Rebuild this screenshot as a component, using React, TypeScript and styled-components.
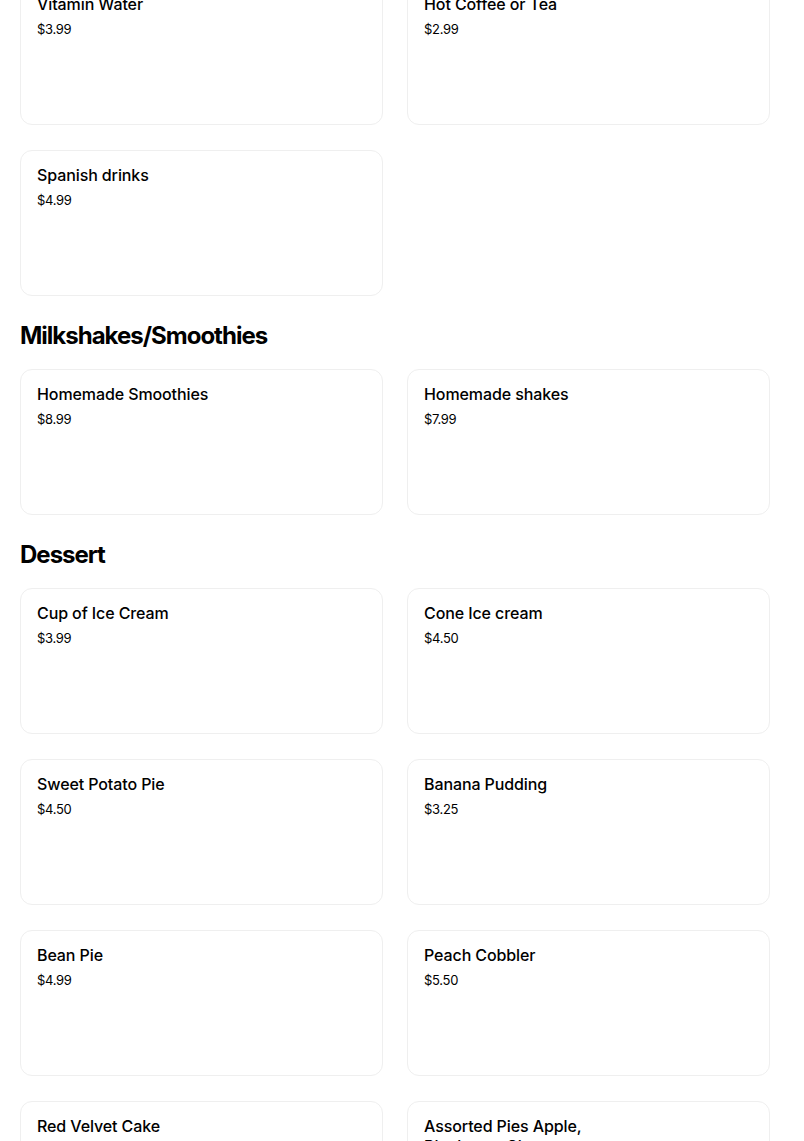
import React from 'react'
import styled, { createGlobalStyle } from 'styled-components'

const GlobalStyle = createGlobalStyle`
  html, body {
    margin: 0;
    padding: 0;
    background: #ffffff;
    overflow: hidden;
  }
  body {
    font-family: Inter, "Noto Sans", "Liberation Sans", sans-serif;
    color: #000000;
    -webkit-font-smoothing: antialiased;
  }
`

const Page = styled.div`
  width: 750px;
  padding: 0 20px;
  margin-top: -21px;
  display: flex;
  flex-direction: column;
`

const Section = styled.section`
  display: flex;
  flex-direction: column;
`

const SectionTitle = styled.h2`
  margin: 24px 0 17px;
  font-size: 24px;
  line-height: 32px;
  font-weight: 700;
  letter-spacing: -1px;
`

const Grid = styled.div`
  display: grid;
  grid-template-columns: 1fr 1fr;
  column-gap: 24px;
  row-gap: 25px;
`

const Card = styled.div`
  height: 146px;
  box-sizing: border-box;
  border: 1px solid #efefef;
  border-radius: 12px;
  padding: 14px 16px;
  display: flex;
  flex-direction: column;
`

const Info = styled.div`
  width: 200px;
  display: flex;
  flex-direction: column;
`

const ItemName = styled.div`
  font-size: 16px;
  line-height: 20px;
  font-weight: 500;
  letter-spacing: -0.1px;
  color: #000000;
`

const ItemPrice = styled.div`
  margin-top: 5px;
  font-size: 13px;
  line-height: 20px;
  font-weight: 400;
  color: #000000;
  letter-spacing: -0.3px;
`

type Item = { name: string; price: string }

const drinks: Item[] = [
  { name: 'Vitamin Water', price: '$3.99' },
  { name: 'Hot Coffee or Tea', price: '$2.99' },
  { name: 'Spanish drinks', price: '$4.99' },
]

const shakes: Item[] = [
  { name: 'Homemade Smoothies', price: '$8.99' },
  { name: 'Homemade shakes', price: '$7.99' },
]

const dessert: Item[] = [
  { name: 'Cup of Ice Cream', price: '$3.99' },
  { name: 'Cone Ice cream', price: '$4.50' },
  { name: 'Sweet Potato Pie', price: '$4.50' },
  { name: 'Banana Pudding', price: '$3.25' },
  { name: 'Bean Pie', price: '$4.99' },
  { name: 'Peach Cobbler', price: '$5.50' },
  { name: 'Red Velvet Cake', price: '$4.99' },
  { name: 'Assorted Pies Apple, Blueberry, Cherry', price: '$4.50' },
]

function ItemGrid ({ items }: { items: Item[] }) {
  return (
    <Grid>
      {items.map(item => (
        <Card key={item.name}>
          <Info>
            <ItemName>{item.name}</ItemName>
            <ItemPrice>{item.price}</ItemPrice>
          </Info>
        </Card>
      ))}
    </Grid>
  )
}

export default function App () {
  return (
    <>
      <GlobalStyle />
      <Page>
        <Section>
          <ItemGrid items={drinks} />
        </Section>
        <Section>
          <SectionTitle>Milkshakes/Smoothies</SectionTitle>
          <ItemGrid items={shakes} />
        </Section>
        <Section>
          <SectionTitle>Dessert</SectionTitle>
          <ItemGrid items={dessert} />
        </Section>
      </Page>
    </>
  )
}
